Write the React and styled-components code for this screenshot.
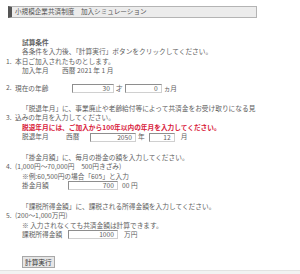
import styled, { createGlobalStyle } from "styled-components";

const GlobalStyle = createGlobalStyle`
  html, body {
    margin: 0;
    padding: 0;
    background: #f2f2f2;
  }
  body {
    font-family: "Noto Sans CJK JP", "Noto Sans", sans-serif;
  }
`;

const Panel = styled.div`
  background: #fff;
  border-bottom: 1px solid #e2e2e2;
  height: 271px;
  box-sizing: border-box;
  padding: 6px 0 0 8px;
  color: #5e5e5e;
  font-size: 6.7px;
  line-height: 9.3px;
`;

const Header = styled.div`
  width: 249px;
  height: 12px;
  box-sizing: border-box;
  background: #ececec;
  border: 1px solid #b4b4b4;
  border-left: 4px solid #555;
  display: flex;
  align-items: center;
  padding-left: 3px;
  color: #555;
  font-size: 6.6px;
`;

const Body = styled.div`
  margin: 20px 0 0 -4px;
  display: flex;
  flex-direction: column;
`;

const Title = styled.div`
  padding-left: 18px;
  font-weight: bold;
`;

const Intro = styled.div`
  padding-left: 18px;
`;

const Section = styled.div`
  display: grid;
  grid-template-columns: 11px 1fr;
  margin-top: ${(p) => p.$gap || 0}px;
`;

const Num = styled.div`
  grid-column: 1;
  grid-row: ${(p) => p.$row};
  padding-left: 2px;
`;

const Line = styled.div`
  grid-column: 2;
  padding-left: ${(p) => p.$indent || 0}px;
  color: ${(p) => (p.$red ? "#d8203a" : "inherit")};
  font-weight: ${(p) => (p.$red ? "bold" : "normal")};
  white-space: nowrap;
`;

const Row = styled.div`
  grid-column: 2;
  display: flex;
  align-items: center;
  height: 10px;
  white-space: nowrap;
`;

const Label = styled.span`
  width: ${(p) => p.$w}px;
  flex: none;
`;

const Box = styled.span`
  width: ${(p) => p.$w}px;
  height: 9px;
  box-sizing: border-box;
  border: 1px solid #8e8e8e;
  border-right-color: #d0d0d0;
  border-bottom-color: #d0d0d0;
  text-align: right;
  padding-right: 3px;
  line-height: 7px;
  margin: 0 ${(p) => p.$mr || 2}px 0 ${(p) => p.$ml || 0}px;
  flex: none;
`;

const Gap = styled.span`
  width: ${(p) => p.$w}px;
  flex: none;
`;

const Button = styled.button`
  margin: 16px 0 0 18px;
  align-self: flex-start;
  font: inherit;
  font-size: 6.7px;
  line-height: 10px;
  color: #333;
  background: #e6e6e6;
  border: 1px solid #a8a8a8;
  padding: 0 2px;
`;

export default function App() {
  return (
    <>
      <GlobalStyle />
      <Panel>
        <Header>小規模企業共済制度　加入シミュレーション</Header>
        <Body>
          <Title>試算条件</Title>
          <Intro>各条件を入力後、「計算実行」ボタンをクリックしてください。</Intro>

          <Section>
            <Num $row={1}>1.</Num>
            <Line>本日ご加入されたものとします。</Line>
            <Line $indent={7}>
              加入年月　　西暦 2021 年 1 月
            </Line>
          </Section>

          <Section $gap={8}>
            <Num $row={1}>2.</Num>
            <Row>
              <Label $w={57}>現在の年齢</Label>
              <Box $w={42}>30</Box>
              才
              <Box $w={37} $ml={2}>0</Box>
              ヵ月
            </Row>
          </Section>

          <Section $gap={11}>
            <Num $row={2}>3.</Num>
            <Line $indent={7}>「脱退年月」に、事業廃止や老齢給付等によって共済金をお受け取りになる見</Line>
            <Line>込みの年月を入力してください。</Line>
            <Line $red $indent={7}>脱退年月には、ご加入から100年以内の年月を入力してください。</Line>
            <Row>
              <Gap $w={7} />
              <Label $w={44}>脱退年月</Label>
              <Label $w={24}>西暦</Label>
              <Box $w={46}>2050</Box>
              年
              <Box $w={26} $ml={4} $mr={6}>12</Box>
              月
            </Row>
          </Section>

          <Section $gap={11}>
            <Num $row={2}>4.</Num>
            <Line $indent={7}>「掛金月額」に、毎月の掛金の額を入力してください。</Line>
            <Line>(1,000円～70,000円　500円きざみ)</Line>
            <Line $indent={7}>※例:60,500円の場合「605」と入力</Line>
            <Row>
              <Gap $w={7} />
              <Label $w={46}>掛金月額</Label>
              <Box $w={50} $mr={4}>700</Box>
              00 円
            </Row>
          </Section>

          <Section $gap={11}>
            <Num $row={2}>5.</Num>
            <Line $indent={7}>「課税所得金額」に、課税される所得金額を入力してください。</Line>
            <Line>(200～1,000万円)</Line>
            <Line $indent={7}>※ 入力されなくても共済金額は計算できます。</Line>
            <Row>
              <Gap $w={7} />
              <Label $w={46}>課税所得金額</Label>
              <Box $w={50} $mr={6}>1000</Box>
              万円
            </Row>
          </Section>

          <Button>計算実行</Button>
        </Body>
      </Panel>
    </>
  );
}
